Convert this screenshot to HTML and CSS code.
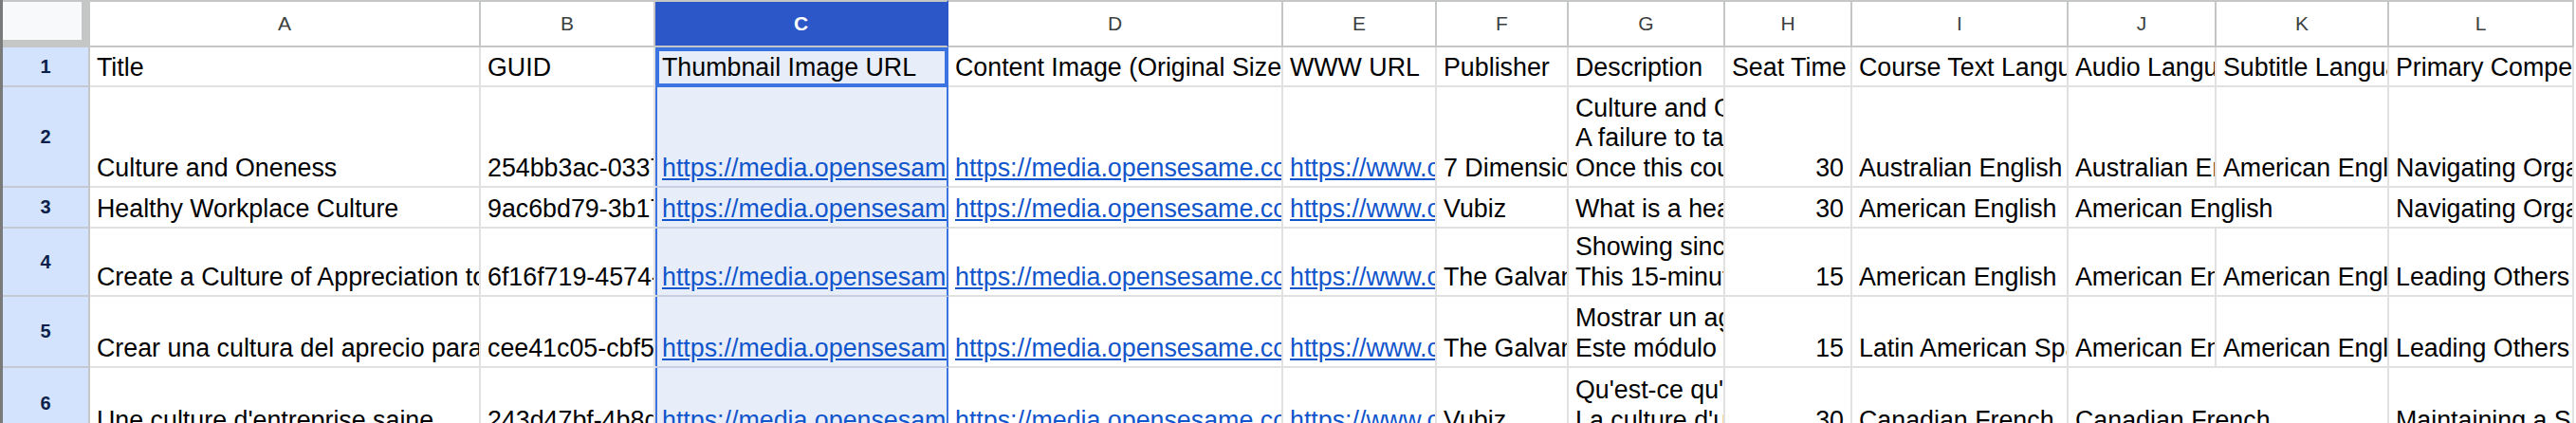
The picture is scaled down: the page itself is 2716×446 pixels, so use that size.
FILE: index.html
```
<!DOCTYPE html>
<html lang="en">
<head>
  <meta charset="UTF-8"/>
  <title>Course catalog</title>
  <link rel="stylesheet" href="styles.css">
</head>
<body>
  <div class="sheet">
    <!-- column headers -->
    <div class="corner"></div>
    <div class="colhead">A</div>
    <div class="colhead">B</div>
    <div class="colhead sel">C</div>
    <div class="colhead">D</div>
    <div class="colhead">E</div>
    <div class="colhead">F</div>
    <div class="colhead">G</div>
    <div class="colhead">H</div>
    <div class="colhead">I</div>
    <div class="colhead">J</div>
    <div class="colhead">K</div>
    <div class="colhead">L</div>

    <!-- row 1 -->
    <div class="rowhead">1</div>
    <div class="cell">Title</div>
    <div class="cell">GUID</div>
    <div class="cell sel active">Thumbnail Image URL</div>
    <div class="cell">Content Image (Original Size)</div>
    <div class="cell">WWW URL</div>
    <div class="cell">Publisher</div>
    <div class="cell">Description</div>
    <div class="cell">Seat Time</div>
    <div class="cell">Course Text Language</div>
    <div class="cell">Audio Language</div>
    <div class="cell">Subtitle Language</div>
    <div class="cell">Primary Competency</div>

    <!-- row 2 -->
    <div class="rowhead">2</div>
    <div class="cell">Culture and Oneness</div>
    <div class="cell">254bb3ac-0337-4c1e-9a3f-8d2e</div>
    <div class="cell sel"><a href="#">https://media.opensesame.com/thumb/254bb3ac.png</a></div>
    <div class="cell"><a href="#">https://media.opensesame.com/content/254bb3ac.png</a></div>
    <div class="cell"><a href="#">https://www.opensesame.com/c/culture-and-oneness</a></div>
    <div class="cell">7 Dimensions Academy</div>
    <div class="cell">
      <div>Culture and Oneness is a mindset</div>
      <div>A failure to take culture seriously</div>
      <div>Once this course is complete</div>
    </div>
    <div class="cell num">30</div>
    <div class="cell">Australian English</div>
    <div class="cell">Australian English</div>
    <div class="cell">American English</div>
    <div class="cell">Navigating Organizations</div>

    <!-- row 3 -->
    <div class="rowhead">3</div>
    <div class="cell">Healthy Workplace Culture</div>
    <div class="cell">9ac6bd79-3b17-4f0a-b2d4-71ce</div>
    <div class="cell sel"><a href="#">https://media.opensesame.com/thumb/9ac6bd79.png</a></div>
    <div class="cell"><a href="#">https://media.opensesame.com/content/9ac6bd79.png</a></div>
    <div class="cell"><a href="#">https://www.opensesame.com/c/healthy-workplace-culture</a></div>
    <div class="cell">Vubiz</div>
    <div class="cell">What is a healthy workplace culture?</div>
    <div class="cell num">30</div>
    <div class="cell">American English</div>
    <div class="cell span2">American English</div>
    <div class="cell">Navigating Organizations</div>

    <!-- row 4 -->
    <div class="rowhead">4</div>
    <div class="cell">Create a Culture of Appreciation to Inspire Your Team</div>
    <div class="cell">6f16f719-4574-4b6e-8c21-0d9a</div>
    <div class="cell sel"><a href="#">https://media.opensesame.com/thumb/6f16f719.png</a></div>
    <div class="cell"><a href="#">https://media.opensesame.com/content/6f16f719.png</a></div>
    <div class="cell"><a href="#">https://www.opensesame.com/c/create-a-culture-of-appreciation</a></div>
    <div class="cell">The Galvanizer</div>
    <div class="cell">
      <div>Showing sincere appreciation</div>
      <div>This 15-minute module</div>
    </div>
    <div class="cell num">15</div>
    <div class="cell">American English</div>
    <div class="cell">American English</div>
    <div class="cell">American English</div>
    <div class="cell">Leading Others</div>

    <!-- row 5 -->
    <div class="rowhead">5</div>
    <div class="cell">Crear una cultura del aprecio para inspirar a su equipo</div>
    <div class="cell">cee41c05-cbf5-47a8-9e13-5b7f</div>
    <div class="cell sel"><a href="#">https://media.opensesame.com/thumb/cee41c05.png</a></div>
    <div class="cell"><a href="#">https://media.opensesame.com/content/cee41c05.png</a></div>
    <div class="cell"><a href="#">https://www.opensesame.com/c/crear-una-cultura-del-aprecio</a></div>
    <div class="cell">The Galvanizer</div>
    <div class="cell">
      <div>Mostrar un agradecimiento sincero</div>
      <div>Este módulo de 15 minutos</div>
    </div>
    <div class="cell num">15</div>
    <div class="cell">Latin American Spanish</div>
    <div class="cell">American English</div>
    <div class="cell">American English</div>
    <div class="cell">Leading Others</div>

    <!-- row 6 -->
    <div class="rowhead">6</div>
    <div class="cell">Une culture d'entreprise saine</div>
    <div class="cell">243d47bf-4b8d-4e52-a6c0-93f1</div>
    <div class="cell sel"><a href="#">https://media.opensesame.com/thumb/243d47bf.png</a></div>
    <div class="cell"><a href="#">https://media.opensesame.com/content/243d47bf.png</a></div>
    <div class="cell"><a href="#">https://www.opensesame.com/c/une-culture-d-entreprise-saine</a></div>
    <div class="cell">Vubiz</div>
    <div class="cell">
      <div>Qu'est-ce qu'une culture d'entreprise saine ?</div>
      <div>La culture d'une entreprise</div>
    </div>
    <div class="cell num">30</div>
    <div class="cell">Canadian French</div>
    <div class="cell span2">Canadian French</div>
    <div class="cell">Maintaining a Safe Workplace</div>
  </div>
</body>
</html>
```
FILE: styles.css
```
* { box-sizing: border-box; }
body { margin: 0; background: #fff; overflow: hidden; font-family: "Liberation Sans", Arial, sans-serif; }

.sheet {
  display: grid;
  grid-template-columns: 92px 412px 184px 309px 353px 162px 139px 165px 134px 228px 156px 182px 195px;
  grid-template-rows: 50px 42px 106px 43px 72px 75px 76px;
  border-left: 3px solid #7a7a7a;
  width: 2714px;
}

/* headers */
.corner { background: #f8f9fa; border-top: 2px solid #c4c7c5; border-right: 9px solid #c4c7c5; border-bottom: 8px solid #c4c7c5; }
.colhead {
  display: flex; align-items: center; justify-content: center;
  border-top: 2px solid #c4c7c5; border-right: 2px solid #c4c7c5; border-bottom: 2px solid #c4c7c5;
  font-size: 21px; color: #3c3f3e; background: #fff;
}
.colhead.sel { background: #2b57c9; color: #fff; font-weight: bold; border-right-color: #2b57c9; }
.rowhead {
  display: flex; align-items: center; justify-content: center;
  background: #d3e3fd; border-right: 2px solid #c4c7c5; border-bottom: 2px solid #c4c9d4;
  font-size: 20px; font-weight: bold; color: #0b1f4a;
}

/* cells */
.cell {
  display: flex; flex-direction: column; justify-content: flex-end;
  padding: 0 7px 3px;
  border-right: 2px solid #e1e1e1; border-bottom: 2px solid #e1e1e1;
  overflow: hidden; white-space: nowrap;
  font-size: 26.8px; line-height: 31.5px; color: #000;
}
.cell a { color: #1155cc; text-decoration: underline; }
.num { align-items: flex-end; }
.span2 { grid-column: span 2; }

/* selected column C */
.cell.sel { background: #e8eef9; border-right-color: #3b73e0; border-bottom-color: #c7cfe0; box-shadow: inset 2px 0 #3b73e0; }
.cell.active {
  border-bottom-color: #3b73e0;
  box-shadow: inset 4px 0 #3b73e0, inset 0 4px #3b73e0, inset -2px 0 #3b73e0, inset 0 -2px #3b73e0;
}
```
